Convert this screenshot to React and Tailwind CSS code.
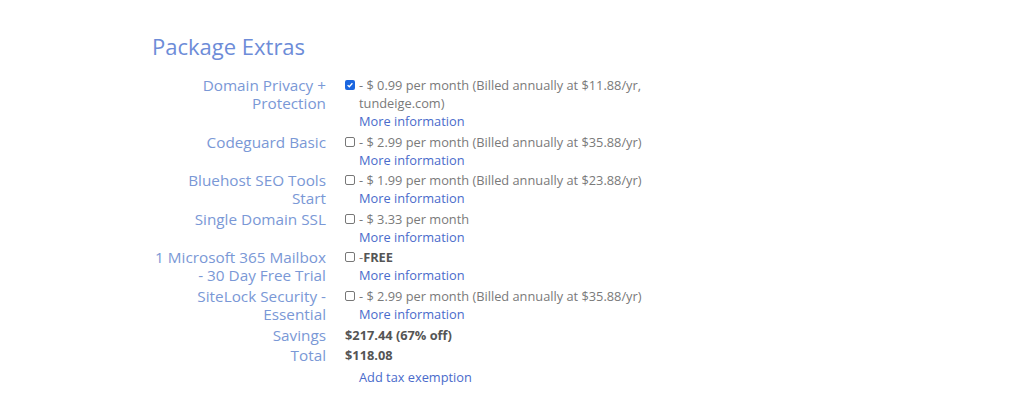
import React from 'react';

const extras = [
  { id: 1, label: 'Domain Privacy + Protection', price: '- $ 0.99 per month (Billed annually at $11.88/yr, tundeige.com)', checked: true },
  { id: 2, label: 'Codeguard Basic', price: '- $ 2.99 per month (Billed annually at $35.88/yr)', checked: false },
  { id: 3, label: 'Bluehost SEO Tools Start', price: '- $ 1.99 per month (Billed annually at $23.88/yr)', checked: false },
  { id: 4, label: 'Single Domain SSL', price: '- $ 3.33 per month', checked: false },
  { id: 5, label: '1 Microsoft 365 Mailbox - 30 Day Free Trial', price: null, checked: false },
  { id: 6, label: 'SiteLock Security - Essential', price: '- $ 2.99 per month (Billed annually at $35.88/yr)', checked: false },
];

const Box = ({ checked }) =>
  checked ? (
    <span className="mt-[4px] flex h-[10px] w-[10px] shrink-0 items-center justify-center rounded-[2px] bg-[#1a66e0]">
      <svg viewBox="0 0 10 10" className="h-[8px] w-[8px]">
        <path d="M2 5.2 L4.1 7.2 L8 2.8" fill="none" stroke="#fff" strokeWidth="1.6" />
      </svg>
    </span>
  ) : (
    <span className="mt-[4px] block h-[10px] w-[10px] shrink-0 rounded-[2px] border border-[#777] bg-white" />
  );

const App = () => {
  return (
    <div className="min-h-[418px] bg-white pl-[152px] pt-[32px] leading-[18px]" style={{ fontFamily: '"Open Sans", sans-serif' }}>
      <h2 className="text-[22px] leading-[28px] text-[#6d8cd8]">Package Extras</h2>

      <div className="mt-[16px] grid grid-cols-[174px_auto] gap-x-[19px] gap-y-[2.6px]">
        {extras.map(item => (
          <React.Fragment key={item.id}>
            <div className="text-right text-[15.3px] text-[#7a98d6]">{item.label}</div>
            <div className="flex gap-[4px] text-[12.8px]">
              <Box checked={item.checked} />
              <div className="w-[290px]">
                {item.price ? (
                  <p className="text-[#7a7a7a]">{item.price}</p>
                ) : (
                  <p className="text-[#7a7a7a]">-<b className="font-bold text-[#555]">FREE</b></p>
                )}
                <a className="text-[#4a6bcb]">More information</a>
              </div>
            </div>
          </React.Fragment>
        ))}

        <div className="text-right text-[15.3px] text-[#7a98d6]">Savings</div>
        <div className="text-[12.8px] font-bold text-[#555]">$217.44 (67% off)</div>

        <div className="text-right text-[15.3px] text-[#7a98d6]">Total</div>
        <div className="text-[12.8px] font-bold text-[#555]">$118.08</div>

        <div />
        <div className="mt-[1.5px] pl-[14px] text-[12.8px] text-[#4a6bcb]">Add tax exemption</div>
      </div>
    </div>
  );
};

export default App;
